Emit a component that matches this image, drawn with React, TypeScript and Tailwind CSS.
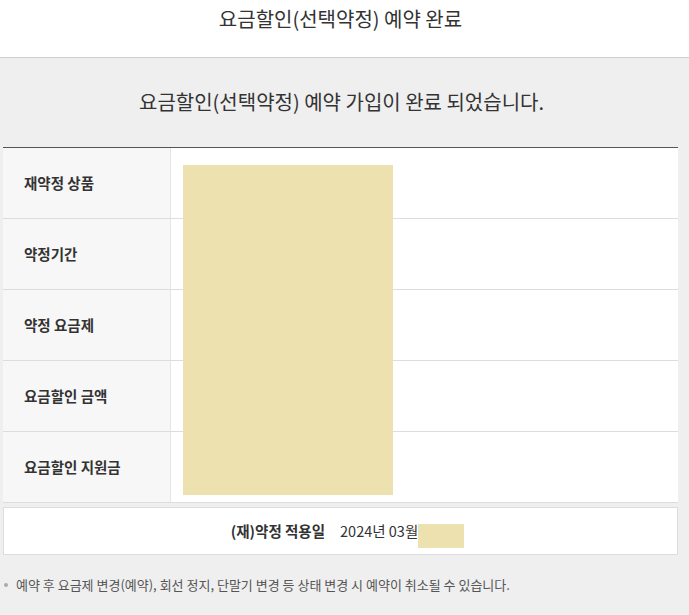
import React from "react"

const rows = ["재약정 상품", "약정기간", "약정 요금제", "요금할인 금액", "요금할인 지원금"]

const font = { fontFamily: '"Noto Sans CJK KR", "Noto Sans", sans-serif' }

export default function App() {
  return (
    <div className="w-[689px] h-[615px] overflow-hidden bg-[#efefef] text-[#333]" style={font}>
      <header className="h-[58px] bg-white border-b border-[#cfcfcf] flex justify-center pt-[5px] pr-[8px]">
        <h1 className="text-[20px] leading-[28px]">요금할인(선택약정) 예약 완료</h1>
      </header>

      <div className="h-[89px] flex items-center justify-center pb-[1px] pr-[6px]">
        <p className="text-[20px] leading-[28px] text-[#333]">요금할인(선택약정) 예약 가입이 완료 되었습니다.</p>
      </div>

      <div className="relative ml-[3px] w-[675px] border-t border-[#555] bg-white">
        {rows.map((label) => (
          <div key={label} className="flex h-[71px] border-b border-[#ddd]">
            <div className="w-[168px] bg-[#f7f7f7] border-r border-[#e5e5e5] flex items-center pl-[21px] text-[14.5px] font-bold text-[#333]">
              {label}
            </div>
            <div className="flex-1" />
          </div>
        ))}
        <div className="absolute left-[180px] top-[17px] w-[210px] h-[330px] bg-[#eee1b0]" />
      </div>

      <div className="ml-[3px] mt-[4px] w-[675px] h-[48px] bg-white border border-[#ddd] flex items-center justify-center pl-[14px] text-[14.5px]">
        <span className="font-bold text-[#333]">(재)약정 적용일</span>
        <span className="ml-[15px] text-[#333]">2024년 03월</span>
        <span className="w-[46px] h-[24px] mt-[10px] bg-[#eee1b0]" />
      </div>

      <div className="mt-[20px] flex items-center pl-[4px] text-[13px] text-[#555]">
        <span className="w-[4px] h-[4px] rounded-full bg-[#aaa] mr-[8px]" />
        <span>예약 후 요금제 변경(예약), 회선 정지, 단말기 변경 등 상태 변경 시 예약이 취소될 수 있습니다.</span>
      </div>
    </div>
  )
}
